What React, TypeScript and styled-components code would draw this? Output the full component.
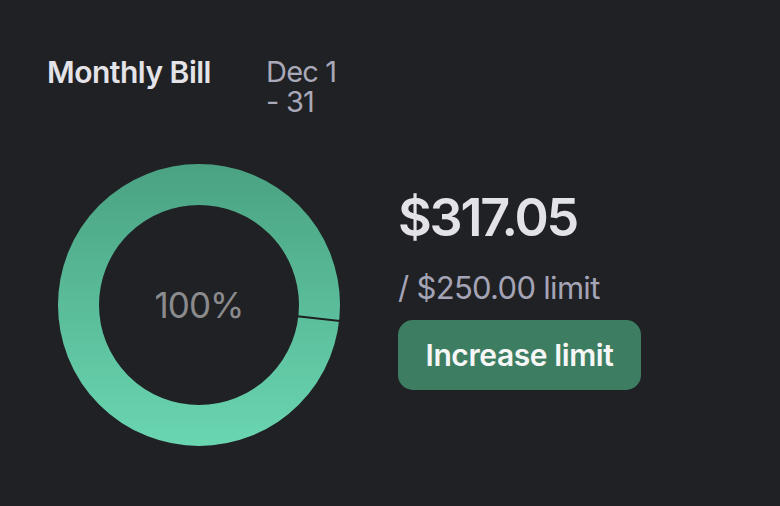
import React from "react";
import styled, { createGlobalStyle } from "styled-components";

const Global = createGlobalStyle`
  html, body { margin: 0; padding: 0; background: #202124; }
  body { font-family: Inter, "Noto Sans", sans-serif; -webkit-font-smoothing: antialiased; }
`;

const Card = styled.div`
  width: 780px;
  height: 506px;
  box-sizing: border-box;
  padding: 57px 0 0 47px;
  background: #202124;
  display: flex;
  flex-direction: column;
`;

const Header = styled.div`
  display: flex;
  align-items: flex-start;
`;

const Title = styled.div`
  width: 219px;
  font-size: 30px;
  line-height: 30px;
  font-weight: 600;
  letter-spacing: -0.5px;
  color: #e3e3e8;
`;

const Period = styled.div`
  width: 80px;
  font-size: 29px;
  line-height: 30px;
  font-weight: 400;
  letter-spacing: -0.8px;
  color: #a9a9b9;
`;

const Body = styled.div`
  display: flex;
  align-items: flex-start;
  margin-top: 47px;
  padding-left: 11px;
`;

const RingWrap = styled.div`
  position: relative;
  width: 282px;
  height: 282px;
  flex: none;
`;

const RingLabel = styled.div`
  position: absolute;
  inset: 0;
  display: flex;
  align-items: center;
  justify-content: center;
  font-size: 35px;
  font-weight: 400;
  letter-spacing: -1px;
  color: #8b8b8d;
`;

const Info = styled.div`
  display: flex;
  flex-direction: column;
  align-items: flex-start;
  margin-left: 58px;
  margin-top: 26px;
`;

const Amount = styled.div`
  font-size: 52px;
  line-height: 56px;
  font-weight: 600;
  letter-spacing: -2.2px;
  color: #e2e2e8;
`;

const Limit = styled.div`
  margin-top: 25px;
  font-size: 31px;
  line-height: 34px;
  font-weight: 400;
  letter-spacing: -0.7px;
  color: #a5a4b6;
`;

const Button = styled.button`
  margin-top: 15px;
  width: 243px;
  height: 70px;
  border: none;
  border-radius: 15px;
  background: #3d7e62;
  color: #f6f6f6;
  font-family: Inter, "Noto Sans", sans-serif;
  font-size: 30px;
  font-weight: 600;
  letter-spacing: -0.4px;
  padding: 0;
  cursor: pointer;
`;

function Ring() {
  const c = 141;
  const a = (6.5 * Math.PI) / 180;
  const x1 = c + 99 * Math.cos(a);
  const y1 = c + 99 * Math.sin(a);
  const x2 = c + 143 * Math.cos(a);
  const y2 = c + 143 * Math.sin(a);
  return (
    <svg width="282" height="282" viewBox="0 0 282 282">
      <defs>
        <linearGradient id="rg" x1="0" y1="0" x2="0" y2="282" gradientUnits="userSpaceOnUse">
          <stop offset="0" stopColor="#4aa282" />
          <stop offset="1" stopColor="#6ad6b1" />
        </linearGradient>
      </defs>
      <circle cx={c} cy={c} r="120.5" fill="none" stroke="url(#rg)" strokeWidth="41" />
      <line x1={x1} y1={y1} x2={x2} y2={y2} stroke="#1d1f20" strokeWidth="2" />
    </svg>
  );
}

export default function App() {
  return (
    <>
      <Global />
      <Card>
        <Header>
          <Title>Monthly Bill</Title>
          <Period>Dec 1 - 31</Period>
        </Header>
        <Body>
          <RingWrap>
            <Ring />
            <RingLabel>100%</RingLabel>
          </RingWrap>
          <Info>
            <Amount>$317.05</Amount>
            <Limit>/ $250.00 limit</Limit>
            <Button>Increase limit</Button>
          </Info>
        </Body>
      </Card>
    </>
  );
}
